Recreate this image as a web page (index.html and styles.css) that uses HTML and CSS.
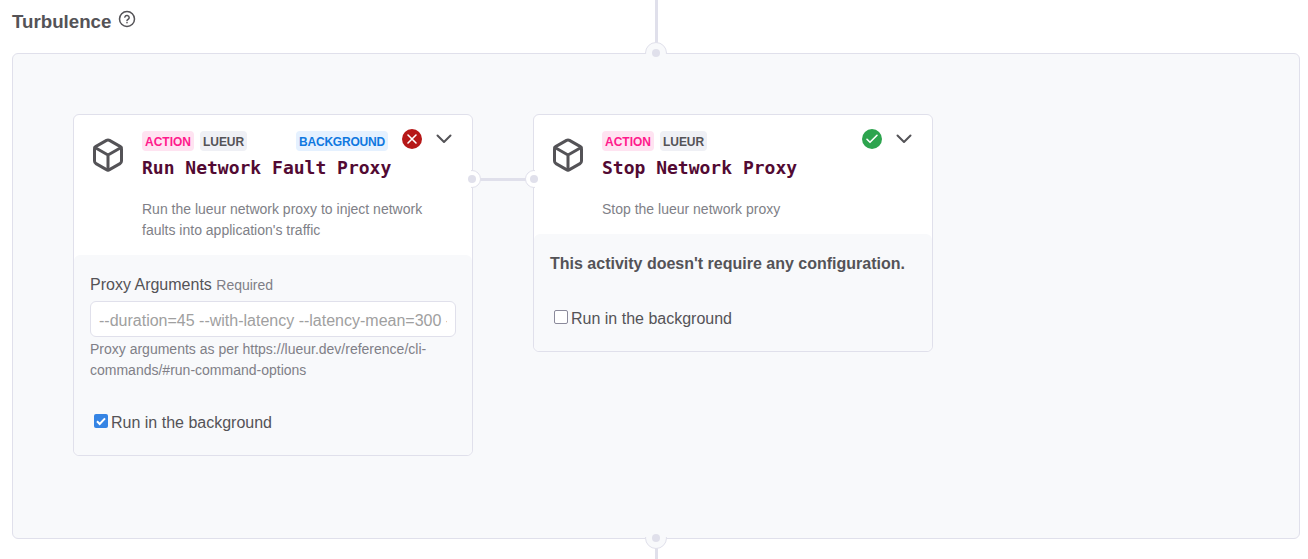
FILE: index.html
```html
<!DOCTYPE html>
<html lang="en">
<head>
<meta charset="utf-8">
<title>Turbulence</title>
<link rel="stylesheet" href="styles.css">
</head>
<body>
<svg class="defs" width="0" height="0">
  <symbol id="box" viewBox="0 0 24 24"><path d="M21 16V8a2 2 0 0 0-1-1.73l-7-4a2 2 0 0 0-2 0l-7 4A2 2 0 0 0 3 8v8a2 2 0 0 0 1 1.73l7 4a2 2 0 0 0 2 0l7-4A2 2 0 0 0 21 16z"/><path d="M3.27 6.96 12 12.01l8.73-5.05M12 22.08V12"/></symbol>
  <symbol id="chevron" viewBox="0 0 20 20"><path d="M3.5 6.5 10 13l6.500-6.500"/></symbol>
</svg>
<header class="heading">
  <h3 class="heading-title">Turbulence</h3>
  <svg class="help" viewBox="0 0 18 18"><circle cx="9" cy="9" r="7.500"/><path d="M6.800 7.100a2.250 2.250 0 0 1 4.400.700c0 1.500-2.200 2-2.200 2.700M9 12.600v.1"/></svg>
</header>
<main class="block">
  <span class="stem stem-top"></span>
  <span class="port port-top"></span>
  <span class="stem stem-bottom"></span>
  <span class="port port-bottom"></span>

  <article class="card">
    <header class="card-head">
      <svg class="card-icon"><use href="#box"/></svg>
      <div class="card-info">
        <div class="tags"><span class="tag action">ACTION</span><span class="tag target">LUEUR</span><span class="tag background">BACKGROUND</span></div>
        <h4 class="card-title">Run Network Fault Proxy</h4>
        <p class="card-desc">Run the lueur network proxy to inject network faults into application's traffic</p>
      </div>
      <div class="controls">
        <svg class="status invalid" viewBox="0 0 20 20"><circle cx="10" cy="10" r="10"/><path d="m6 6 8 8M14 6l-8 8"/></svg>
        <svg class="chevron"><use href="#chevron"/></svg>
      </div>
    </header>
    <div class="card-body">
      <label class="label" for="args">Proxy Arguments <span class="required">Required</span></label>
      <input class="field" id="args" type="text" placeholder="--duration=45 --with-latency --latency-mean=300 --latency-stddev=40">
      <p class="hint">Proxy arguments as per https://lueur.dev/reference/cli-commands/#run-command-options</p>
      <div class="check"><svg class="checkbox checked" viewBox="0 0 14 14"><path d="m3 7.300 2.700 2.700L11 4.400"/></svg><span>Run in the background</span></div>
    </div>
    <span class="port port-right"></span>
  </article>

  <span class="link"></span>

  <article class="card">
    <header class="card-head">
      <svg class="card-icon"><use href="#box"/></svg>
      <div class="card-info">
        <div class="tags"><span class="tag action">ACTION</span><span class="tag target">LUEUR</span></div>
        <h4 class="card-title">Stop Network Proxy</h4>
        <p class="card-desc">Stop the lueur network proxy</p>
      </div>
      <div class="controls">
        <svg class="status valid" viewBox="0 0 20 20"><circle cx="10" cy="10" r="10"/><path d="m5 10.300 3 3 7-7"/></svg>
        <svg class="chevron"><use href="#chevron"/></svg>
      </div>
    </header>
    <div class="card-body">
      <p class="notice">This activity doesn't require any configuration.</p>
      <div class="check"><svg class="checkbox" viewBox="0 0 14 14"></svg><span>Run in the background</span></div>
    </div>
    <span class="port port-left"></span>
  </article>
</main>
</body>
</html>
```

FILE: styles.css
```css
* { box-sizing: border-box; }
body {
  margin: 0;
  padding: 0 8px 0 12px;
  height: 559px;
  overflow: hidden;
  background: #fff;
  color: #545357;
  font: 16px/24px "Liberation Sans", Arial, sans-serif;
}
h3, h4, p { margin: 0; }
svg { display: block; fill: none; stroke: currentColor; stroke-linecap: round; stroke-linejoin: round; }
.defs { position: absolute; }

.heading { display: flex; gap: 7px; height: 53px; padding-top: 8px; }
.heading-title { font-size: 18.720px; line-height: 27px; }
.help { width: 18px; height: 18px; margin-top: 2px; stroke-width: 1.500; }

.block {
  position: relative;
  display: flex;
  align-items: flex-start;
  height: 486px;
  padding: 60px;
  background: #f8f9fb;
  border: 1px solid #e0e0eb;
  border-radius: 6px;
}
.stem { position: absolute; left: 642px; width: 3px; background: #e0e0eb; }
.stem-top { top: -54px; height: 45px; }
.stem-bottom { top: 494px; height: 12px; }

/* The ring is drawn only on the outer side of the edge it sits on. */
.port { position: absolute; width: 22px; height: 22px; }
.port::before { content: ""; position: absolute; inset: 0; border: 1px solid #e0e0eb; border-radius: 50%; background: #f8f9fb; }
.port::after { content: ""; position: absolute; inset: 7px; border-radius: 50%; background: #e0e0eb; }
.port-top { left: 632px; top: -12px; }
.port-top::before { clip-path: inset(0 0 10px 0); }
.port-bottom { left: 632px; top: 473px; }
.port-bottom::before { clip-path: inset(10px 0 0 0); }
.port-right, .port-left { width: 18px; height: 18px; top: 55px; }
.port-right::before, .port-left::before { background: #fff; }
.port-right::after, .port-left::after { inset: 5px; }
.port-right { right: -9px; }
.port-right::before { clip-path: inset(0 0 0 8px); }
.port-left { left: -9px; }
.port-left::before { clip-path: inset(0 8px 0 0); }

.card { position: relative; width: 400px; background: #fff; border: 1px solid #e0e0eb; border-radius: 6px; }
.card-head { display: flex; padding: 14px 16px 14px; }
.card-icon { width: 36px; height: 36px; margin: 8px 16px 0 0; stroke-width: 2; flex: none; }
.card-info { width: 246px; padding-top: 2px; }
.tags { display: flex; gap: 6px; }
.tag { height: 20px; padding: 1px 3px 0; border-radius: 4px; font-size: 12px; font-weight: 700; line-height: 21px; }
.action { background: #ffe3f1; color: #ff1a8c; }
.target { background: #eff0f5; color: #545357; letter-spacing: -0.050px; }
.background { margin-left: auto; background: #e5f1ff; color: #0f78e0; letter-spacing: -0.200px; }
.card-title { margin-top: 3px; white-space: nowrap; font: 700 18px/27px "DejaVu Sans Mono", monospace; color: #520a33; }
.card-desc { width: 300px; margin-top: 18px; font-size: 14px; line-height: 21px; color: #807f87; }
.controls { display: flex; gap: 12px; margin-left: 14px; }
.status { width: 20px; height: 20px; flex: none; }
.status circle { stroke: none; }
.status path { stroke: #fff; stroke-width: 1.600; }
.invalid circle { fill: #b61717; }
.valid circle { fill: #2da44e; }
.chevron { width: 20px; height: 20px; flex: none; stroke-width: 2; }

.card-body { padding: 18px 16px 20px; background: #f8f9fb; border-radius: 6px; }
.label { display: block; }
.required { font-size: 14px; color: #807f87; }
.field {
  display: block;
  width: 366px;
  height: 36px;
  margin-top: 4px;
  padding: 3px 8px 0;
  border: 1px solid #e0e0eb;
  border-radius: 6px;
  background: #fff;
  font: 16px "Liberation Sans", Arial, sans-serif;
}
.field::placeholder { color: #a0a0a0; opacity: 1; }
.hint { margin-top: 2px; font-size: 14px; line-height: 21px; color: #807f87; }
.check { display: flex; gap: 3px; margin: 30px 0 0 4px; }
.checkbox { width: 14px; height: 14px; margin-top: 3px; border: 1px solid #8b8a9b; border-radius: 2px; background: #fff; }
.checkbox.checked { border: 0; background: #3584e4; color: #fff; stroke-width: 2; stroke-linecap: butt; stroke-linejoin: miter; }
.notice { font-weight: 700; }
.notice + .check { margin-top: 31px; }

.link { width: 60px; height: 3px; margin-top: 64px; background: #e0e0eb; }
```
